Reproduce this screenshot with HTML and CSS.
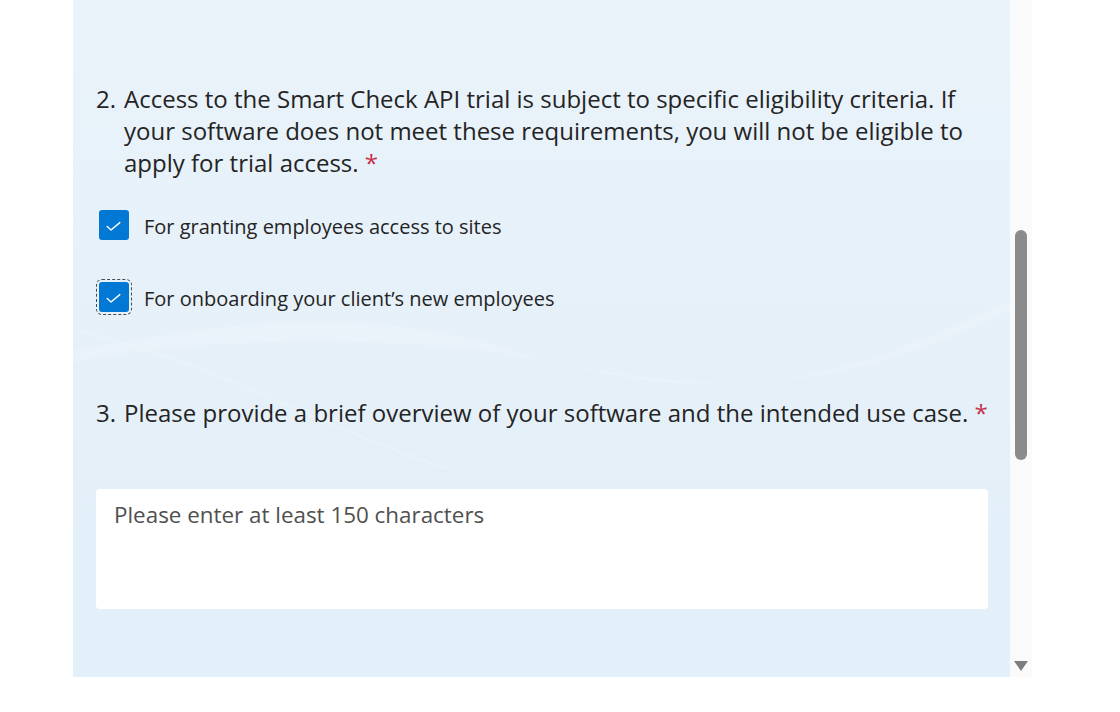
FILE: index.html
```html
<!DOCTYPE html>
<html lang="en">
<head>
<meta charset="utf-8">
<title>Smart Check API trial</title>
<link rel="stylesheet" href="styles.css">
</head>
<body>
<div class="frame">
  <main class="panel">
    <div class="question q2">
      <span class="num">2.</span>
      <p class="qtext"><span>Access to the Smart Check API trial is subject to specific eligibility criteria. If your software does not meet these requirements, you will not be eligible to apply for trial access.</span> <span class="req">*</span></p>
    </div>
    <div class="options">
      <div class="option">
        <span class="box"><svg width="30" height="30" viewBox="0 0 30 30"><path d="M8.2 16.4 L12 20 L20.8 12.6" fill="none" stroke="#fff" stroke-width="1.4" stroke-linecap="round" stroke-linejoin="round"/></svg></span>
        <span class="label">For granting employees access to sites</span>
      </div>
      <div class="option">
        <span class="box focused"><svg width="30" height="30" viewBox="0 0 30 30"><path d="M8.2 16.4 L12 20 L20.8 12.6" fill="none" stroke="#fff" stroke-width="1.4" stroke-linecap="round" stroke-linejoin="round"/></svg></span>
        <span class="label">For onboarding your client’s new employees</span>
      </div>
    </div>
    <div class="question q3">
      <span class="num">3.</span>
      <p class="qtext"><span>Please provide a brief overview of your software and the intended use case.</span> <span class="req">*</span></p>
    </div>
    <div class="textarea">
      <span class="placeholder">Please enter at least 150 characters</span>
    </div>
  </main>
  <div class="scrollbar">
    <div class="thumb"></div>
    <div class="arrow"></div>
  </div>
</div>
</body>
</html>
```

FILE: styles.css
```css
html, body {
  margin: 0;
  padding: 0;
  background: #ffffff;
}

body {
  font-family: "Open Sans", "Noto Sans", sans-serif;
  color: #242424;
}

.frame {
  display: flex;
  margin-left: 73px;
  width: 959px;
  height: 677px;
  overflow: hidden;
}

.panel {
  flex: 1;
  box-sizing: border-box;
  padding: 83px 22px 0 23px;
  background-color: #e6f1fa;
  background-image:
    url("data:image/svg+xml;utf8,<svg xmlns='http://www.w3.org/2000/svg' width='937' height='677' viewBox='0 0 937 677'><path d='M0 350 C 120 330, 260 300, 420 345 S 700 420, 937 300 L 937 310 C 700 430, 560 370, 420 352 S 120 340, 0 362 Z' fill='white' fill-opacity='0.16'/><path d='M0 330 C 140 360, 250 430, 380 470' fill='none' stroke='white' stroke-opacity='0.13' stroke-width='3'/></svg>"),
    linear-gradient(180deg, #eaf3fa 0%, #e5f0f9 55%, #e3f0f9 100%);
  background-repeat: no-repeat;
}

.question {
  display: flex;
  font-size: 24px;
  line-height: 32px;
}

.num {
  flex: none;
  width: 28px;
}

.qtext {
  flex: 1;
  margin: 0;
}

.req {
  color: #c4314b;
}

.options {
  display: flex;
  flex-direction: column;
  gap: 42px;
  margin-top: 31px;
  padding-left: 3px;
}

.option {
  display: flex;
  align-items: center;
  gap: 15px;
  height: 30px;
}

.box {
  flex: none;
  width: 30px;
  height: 30px;
  border-radius: 3px;
  background: #0078d4;
  display: flex;
}

.box.focused {
  outline: 1px dashed #4a4a4a;
  outline-offset: 2px;
}

.label {
  font-size: 20px;
  color: #242424;
  padding-top: 2px;
}

.q3 {
  margin-top: 85px;
}

.textarea {
  margin-top: 60px;
  height: 120px;
  box-sizing: border-box;
  padding: 11px 18px;
  background: #ffffff;
  border-radius: 4px;
  font-size: 22.4px;
  line-height: 30px;
}

.placeholder {
  color: #505050;
}

.scrollbar {
  flex: none;
  width: 22px;
  background: #fafafa;
  display: flex;
  flex-direction: column;
  align-items: center;
}

.thumb {
  margin-top: 230px;
  width: 12px;
  height: 230px;
  border-radius: 6px;
  background: #8b8b8b;
  margin-left: -1px;
}

.arrow {
  margin-top: auto;
  margin-bottom: 6px;
  width: 0;
  height: 0;
  border-left: 7px solid transparent;
  border-right: 7px solid transparent;
  border-top: 10px solid #7d7d7d;
}
```
